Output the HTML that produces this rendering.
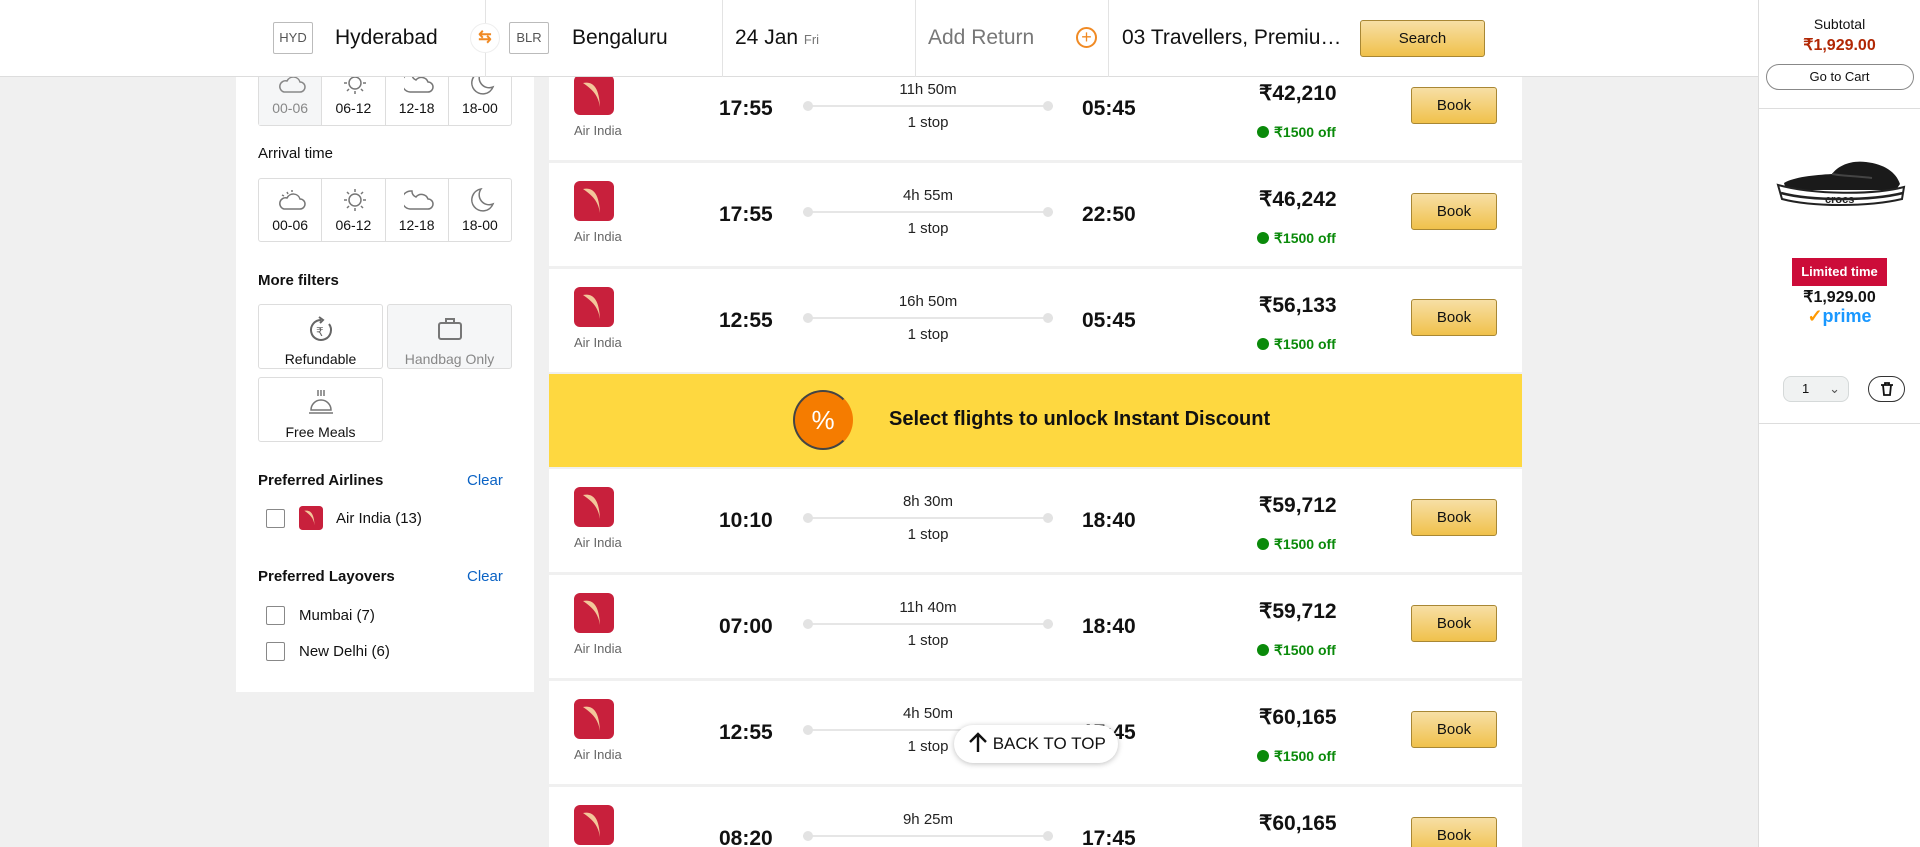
<!DOCTYPE html>
<html><head><meta charset="utf-8"><style>
*{box-sizing:border-box;margin:0;padding:0}
html,body{width:1920px;height:847px;overflow:hidden}
body{background:#f0f0f0;font-family:"Liberation Sans",sans-serif;color:#111}
#wrap{position:relative;width:1920px;height:847px;overflow:hidden}
.abs{position:absolute}
#hdr{left:0;top:0;width:1758px;height:77px;background:#fff;border-bottom:1px solid #ddd;z-index:5}
.code{position:absolute;top:22px;height:32px;width:40px;border:1px solid #bbb;border-radius:2px;font-size:13px;color:#555;text-align:center;line-height:30px}
.ht{position:absolute;top:26px;font-size:21px;color:#111}
.vd{position:absolute;top:0;width:1px;height:77px;background:#e3e3e3}
#side{left:236px;top:60px;width:298px;height:632px;background:#fff}
.grid{position:absolute;left:22px;width:254px;height:64px;border:1px solid #ddd;border-radius:3px;display:flex}
.grid div{flex:1;border-right:1px solid #ddd;text-align:center;font-size:14px;padding-top:38px;position:relative}
.grid div:last-child{border-right:none}
.grid svg{position:absolute;left:18px;top:8px}
.lbl{position:absolute;left:22px;font-size:15px}
.b{font-weight:bold}
.fb{position:absolute;border:1px solid #ddd;border-radius:3px;text-align:center;font-size:14px;padding-top:46px;background:#fff}
.fb svg{position:absolute;left:50%;top:10px;transform:translateX(-50%)}
.cb{position:absolute;left:30px;width:19px;height:19px;border:1px solid #888;border-radius:2px}
.row{position:absolute;left:549px;width:973px;height:103px;background:#fff}
.logo{position:absolute;left:25px;top:18px}
.an{position:absolute;left:25px;top:66px;font-size:13px;color:#666}
.tm{position:absolute;top:40px;font-size:21px;font-weight:bold}
.dur{position:absolute;left:254px;width:250px;text-align:center;font-size:15px;color:#222}
.ln{position:absolute;left:254px;top:48px;width:250px;height:2px;background:#e6e6e6}
.ln:before,.ln:after{content:"";position:absolute;top:-4px;width:10px;height:10px;border-radius:50%;background:#e3e3e3}
.ln:before{left:0}.ln:after{right:0}
.pr{position:absolute;left:710px;top:24px;font-size:21px;font-weight:bold}
.off{position:absolute;left:708px;top:67px;font-size:14px;font-weight:bold;color:#0a8a0a}
.off i{display:inline-block;width:12px;height:12px;border-radius:50%;background:#0a8a0a;vertical-align:-1px;margin-right:5px}
.book{position:absolute;left:862px;top:30px;width:86px;height:37px;border:1px solid #a88734;border-radius:3px;background:linear-gradient(#f7dfa5,#f0c14b);font-size:15px;text-align:center;line-height:35px}
#cart{left:1758px;top:0;width:162px;height:847px;background:#fff;border-left:1px solid #ddd;text-align:center}
</style></head><body><div id="wrap">

<div id="side" class="abs">
 <div class="grid" style="top:2px;border-top:none">
  <div style="background:#f5f6f7;color:#888"><svg width="30" height="26" viewBox="0 0 30 26" fill="none" stroke="#888" stroke-width="1.5"><path d="M7 22h16a5 5 0 0 0 0-10 7 7 0 0 0-13-1 5 5 0 0 0-3 11z"/></svg>00-06</div>
  <div><svg width="30" height="26" viewBox="0 0 30 26" fill="none" stroke="#777" stroke-width="1.5"><circle cx="15" cy="13" r="6"/><path d="M15 21v3M4 13h3M23 13h3M7 21l2-2M21 19l2 2"/></svg>06-12</div>
  <div><svg width="30" height="26" viewBox="0 0 30 26" fill="none" stroke="#777" stroke-width="1.5"><path d="M6 22h18a5 5 0 0 0 0-10 7 7 0 0 0-12-2 6 6 0 0 1-4-6 6 6 0 0 0-2 18z"/></svg>12-18</div>
  <div><svg width="30" height="26" viewBox="0 0 30 26" fill="none" stroke="#777" stroke-width="1.5"><path d="M14 2a11 11 0 1 0 12 15 10 10 0 0 1-12-15z"/></svg>18-00</div>
 </div>
 <div class="lbl" style="top:85px">Arrival time</div>
 <div class="grid" style="top:118px">
  <div><svg width="30" height="26" viewBox="0 0 30 26" fill="none" stroke="#777" stroke-width="1.5"><path d="M7 22h16a5 5 0 0 0 0-10 7 7 0 0 0-13-1 5 5 0 0 0-3 11z"/><path d="M10 5l1 2M5 8l2 1M15 3v2"/></svg>00-06</div>
  <div><svg width="30" height="26" viewBox="0 0 30 26" fill="none" stroke="#777" stroke-width="1.5"><circle cx="15" cy="13" r="6"/><path d="M15 2v3M15 21v3M4 13h3M23 13h3M7 5l2 2M21 19l2 2M7 21l2-2M21 7l2-2"/></svg>06-12</div>
  <div><svg width="30" height="26" viewBox="0 0 30 26" fill="none" stroke="#777" stroke-width="1.5"><path d="M6 22h18a5 5 0 0 0 0-10 7 7 0 0 0-12-2 6 6 0 0 1-4-6 6 6 0 0 0-2 18z"/></svg>12-18</div>
  <div><svg width="30" height="26" viewBox="0 0 30 26" fill="none" stroke="#777" stroke-width="1.5"><path d="M14 2a11 11 0 1 0 12 15 10 10 0 0 1-12-15z"/></svg>18-00</div>
 </div>
 <div class="lbl b" style="top:212px">More filters</div>
 <div class="fb" style="left:22px;top:244px;width:125px;height:65px"><svg width="28" height="30" viewBox="0 0 28 30" fill="none" stroke="#666" stroke-width="2"><path d="M22 9a10 10 0 1 1-8-4"/><path d="M12 2l4 3-3 3"/><text x="9" y="21" font-size="12" fill="#666" stroke="none" font-family="Liberation Sans">₹</text></svg>Refundable</div>
 <div class="fb" style="left:151px;top:244px;width:125px;height:65px;background:#f5f6f7;color:#888"><svg width="28" height="28" viewBox="0 0 28 28" fill="none" stroke="#777" stroke-width="2"><rect x="3" y="8" width="22" height="16" rx="2"/><path d="M10 8V4h8v4"/></svg>Handbag Only</div>
 <div class="fb" style="left:22px;top:317px;width:125px;height:65px"><svg width="28" height="30" viewBox="0 0 28 30" fill="none" stroke="#777" stroke-width="1.5"><path d="M4 22a10 10 0 0 1 20 0zM2 25h24M11 2v6M14 2v6M17 2v6"/></svg>Free Meals</div>
 <div class="lbl b" style="top:412px">Preferred Airlines</div><div class="abs" style="left:231px;top:412px;color:#0a62c4;font-size:15px">Clear</div>
 <div class="cb" style="top:449px"></div>
 <svg class="abs" style="left:63px;top:446px" width="24" height="24" viewBox="0 0 40 40"><rect width="40" height="40" rx="6" fill="#c8203c"/><path d="M9 8c10-2 16 4 17 24-2-12-7-17-17-24z" fill="#f3c79a"/></svg>
 <div class="lbl" style="left:100px;top:450px">Air India (13)</div>
 <div class="lbl b" style="top:508px">Preferred Layovers</div><div class="abs" style="left:231px;top:508px;color:#0a62c4;font-size:15px">Clear</div>
 <div class="cb" style="top:546px"></div><div class="lbl" style="left:63px;top:547px">Mumbai (7)</div>
 <div class="cb" style="top:582px"></div><div class="lbl" style="left:63px;top:583px">New Delhi (6)</div>
</div>

<div class="row" style="top:57px"><svg class="logo" width="40" height="40" viewBox="0 0 40 40"><rect width="40" height="40" rx="6" fill="#c8203c"/><path d="M9 8c10-2 16 4 17 24-2-12-7-17-17-24z" fill="#f3c79a"/></svg><div class="an">Air India</div><div class="tm" style="left:170px">17:55</div><div class="dur" style="top:24px">11h 50m</div><div class="ln"></div><div class="dur" style="top:57px">1 stop</div><div class="tm" style="left:533px">05:45</div><div class="pr">₹42,210</div><div class="off"><i></i>₹1500 off</div><div class="book">Book</div></div>

<div class="row" style="top:163px"><svg class="logo" width="40" height="40" viewBox="0 0 40 40"><rect width="40" height="40" rx="6" fill="#c8203c"/><path d="M9 8c10-2 16 4 17 24-2-12-7-17-17-24z" fill="#f3c79a"/></svg><div class="an">Air India</div><div class="tm" style="left:170px">17:55</div><div class="dur" style="top:24px">4h 55m</div><div class="ln"></div><div class="dur" style="top:57px">1 stop</div><div class="tm" style="left:533px">22:50</div><div class="pr">₹46,242</div><div class="off"><i></i>₹1500 off</div><div class="book">Book</div></div>

<div class="row" style="top:269px"><svg class="logo" width="40" height="40" viewBox="0 0 40 40"><rect width="40" height="40" rx="6" fill="#c8203c"/><path d="M9 8c10-2 16 4 17 24-2-12-7-17-17-24z" fill="#f3c79a"/></svg><div class="an">Air India</div><div class="tm" style="left:170px">12:55</div><div class="dur" style="top:24px">16h 50m</div><div class="ln"></div><div class="dur" style="top:57px">1 stop</div><div class="tm" style="left:533px">05:45</div><div class="pr">₹56,133</div><div class="off"><i></i>₹1500 off</div><div class="book">Book</div></div>

<div class="abs" style="left:549px;top:374px;width:973px;height:93px;background:#fed840">
 <div class="abs" style="left:244px;top:16px;width:60px;height:60px;border-radius:50%;background:#f57c00;border:2px solid #444;border-right-color:#f57c00;color:#fff;font-size:26px;text-align:center;line-height:56px">%</div>
 <div class="abs b" style="left:340px;top:34px;font-size:20px">Select flights to unlock Instant Discount</div>
</div>

<div class="row" style="top:469px"><svg class="logo" width="40" height="40" viewBox="0 0 40 40"><rect width="40" height="40" rx="6" fill="#c8203c"/><path d="M9 8c10-2 16 4 17 24-2-12-7-17-17-24z" fill="#f3c79a"/></svg><div class="an">Air India</div><div class="tm" style="left:170px">10:10</div><div class="dur" style="top:24px">8h 30m</div><div class="ln"></div><div class="dur" style="top:57px">1 stop</div><div class="tm" style="left:533px">18:40</div><div class="pr">₹59,712</div><div class="off"><i></i>₹1500 off</div><div class="book">Book</div></div>

<div class="row" style="top:575px"><svg class="logo" width="40" height="40" viewBox="0 0 40 40"><rect width="40" height="40" rx="6" fill="#c8203c"/><path d="M9 8c10-2 16 4 17 24-2-12-7-17-17-24z" fill="#f3c79a"/></svg><div class="an">Air India</div><div class="tm" style="left:170px">07:00</div><div class="dur" style="top:24px">11h 40m</div><div class="ln"></div><div class="dur" style="top:57px">1 stop</div><div class="tm" style="left:533px">18:40</div><div class="pr">₹59,712</div><div class="off"><i></i>₹1500 off</div><div class="book">Book</div></div>

<div class="row" style="top:681px"><svg class="logo" width="40" height="40" viewBox="0 0 40 40"><rect width="40" height="40" rx="6" fill="#c8203c"/><path d="M9 8c10-2 16 4 17 24-2-12-7-17-17-24z" fill="#f3c79a"/></svg><div class="an">Air India</div><div class="tm" style="left:170px">12:55</div><div class="dur" style="top:24px">4h 50m</div><div class="ln"></div><div class="dur" style="top:57px">1 stop</div><div class="tm" style="left:533px">17:45</div><div class="pr">₹60,165</div><div class="off"><i></i>₹1500 off</div><div class="book">Book</div></div>

<div class="row" style="top:787px"><svg class="logo" width="40" height="40" viewBox="0 0 40 40"><rect width="40" height="40" rx="6" fill="#c8203c"/><path d="M9 8c10-2 16 4 17 24-2-12-7-17-17-24z" fill="#f3c79a"/></svg><div class="an">Air India</div><div class="tm" style="left:170px">08:20</div><div class="dur" style="top:24px">9h 25m</div><div class="ln"></div><div class="dur" style="top:57px">1 stop</div><div class="tm" style="left:533px">17:45</div><div class="pr">₹60,165</div><div class="off"><i></i>₹1500 off</div><div class="book">Book</div></div>

<div class="abs" style="left:954px;top:725px;width:164px;height:38px;background:#fff;border-radius:19px;box-shadow:0 1px 6px rgba(0,0,0,.25);font-size:17px;line-height:38px;padding-left:14px;z-index:3">
 <svg style="vertical-align:-4px" width="20" height="22" viewBox="0 0 20 22" fill="none" stroke="#111" stroke-width="2.4"><path d="M10 21V3M2 11l8-8 8 8"/></svg> BACK TO TOP</div>

<div id="hdr" class="abs">
 <div class="code" style="left:273px">HYD</div><div class="ht" style="left:335px">Hyderabad</div>
 <div class="vd" style="left:485px"></div>
 <div class="abs" style="left:470px;top:23px;width:30px;height:30px;border-radius:50%;background:#fff;border:1px solid #eee;color:#f08a24;font-size:16px;text-align:center;line-height:28px;font-weight:bold">⇆</div>
 <div class="code" style="left:509px">BLR</div><div class="ht" style="left:572px">Bengaluru</div>
 <div class="vd" style="left:722px"></div>
 <div class="ht" style="left:735px">24 Jan <span style="font-size:13px;color:#777">Fri</span></div>
 <div class="vd" style="left:915px"></div>
 <div class="ht" style="left:928px;color:#777">Add Return</div>
 <div class="abs" style="left:1076px;top:27px;width:21px;height:21px;border:2px solid #f08a24;border-radius:50%;color:#f08a24;font-size:18px;line-height:16px;text-align:center">+</div>
 <div class="vd" style="left:1108px"></div>
 <div class="ht" style="left:1122px">03 Travellers, Premiu…</div>
 <div class="abs" style="left:1360px;top:20px;width:125px;height:37px;border:1px solid #a88734;border-radius:3px;background:linear-gradient(#f7dfa5,#f0c14b);font-size:15px;text-align:center;line-height:35px">Search</div>
</div>

<div id="cart" class="abs">
 <div style="margin-top:16px;font-size:14px">Subtotal</div>
 <div style="font-size:16px;font-weight:bold;color:#b12704;margin-top:3px">₹1,929.00</div>
 <div style="margin:9px auto 0;width:148px;height:26px;border:1px solid #888;border-radius:13px;font-size:13px;line-height:24px">Go to Cart</div>
 <div style="margin-top:18px;border-top:1px solid #ddd"></div>
 <svg style="margin-top:44px" width="140" height="70" viewBox="0 0 140 70">
  <path d="M14 30c10-6 30-8 48-9 6-8 18-14 34-12 18 2 30 10 34 22l-4 6H16z" fill="#1a1a1a"/>
  <path d="M62 21c10 2 25 2 40 4" stroke="#444" stroke-width="2" fill="none"/>
  <path d="M8 32l4 14c30 8 86 8 120 0l2-12c-30 8-90 8-126-2z" fill="#fff" stroke="#222" stroke-width="2"/>
  <path d="M11 40c30 8 90 8 122 0" stroke="#222" stroke-width="2.5" fill="none"/>
  <text x="55" y="50" font-size="11" font-weight="bold" font-family="Liberation Sans" fill="#222">crocs</text>
 </svg>
 <div style="margin:30px auto 0;width:95px;height:28px;background:#cc0c39;color:#fff;font-size:13px;font-weight:bold;line-height:28px">Limited time</div>
 <div style="font-size:16px;font-weight:bold;margin-top:1px">₹1,929.00</div>
 <div style="font-size:18px;font-weight:bold;color:#1a98ff;margin-top:-1px"><span style="color:#f90">✓</span>prime</div>
 <div class="abs" style="left:24px;top:376px;width:66px;height:26px;background:#f0f2f2;border:1px solid #d5d9d9;border-radius:8px;font-size:13px;line-height:24px;text-align:left;padding-left:18px">1<span style="position:absolute;right:8px;color:#555">⌄</span></div>
 <div class="abs" style="left:109px;top:376px;width:37px;height:26px;border:1px solid #333;border-radius:13px">
  <svg style="margin-top:4px" width="16" height="16" viewBox="0 0 16 16" fill="none" stroke="#111" stroke-width="1.8"><path d="M2 4h12M6 4V2h4v2M4 4l1 10h6l1-10"/></svg></div>
 <div class="abs" style="left:0;top:423px;width:162px;border-top:1px solid #ddd"></div>
</div>
</div></body></html>
